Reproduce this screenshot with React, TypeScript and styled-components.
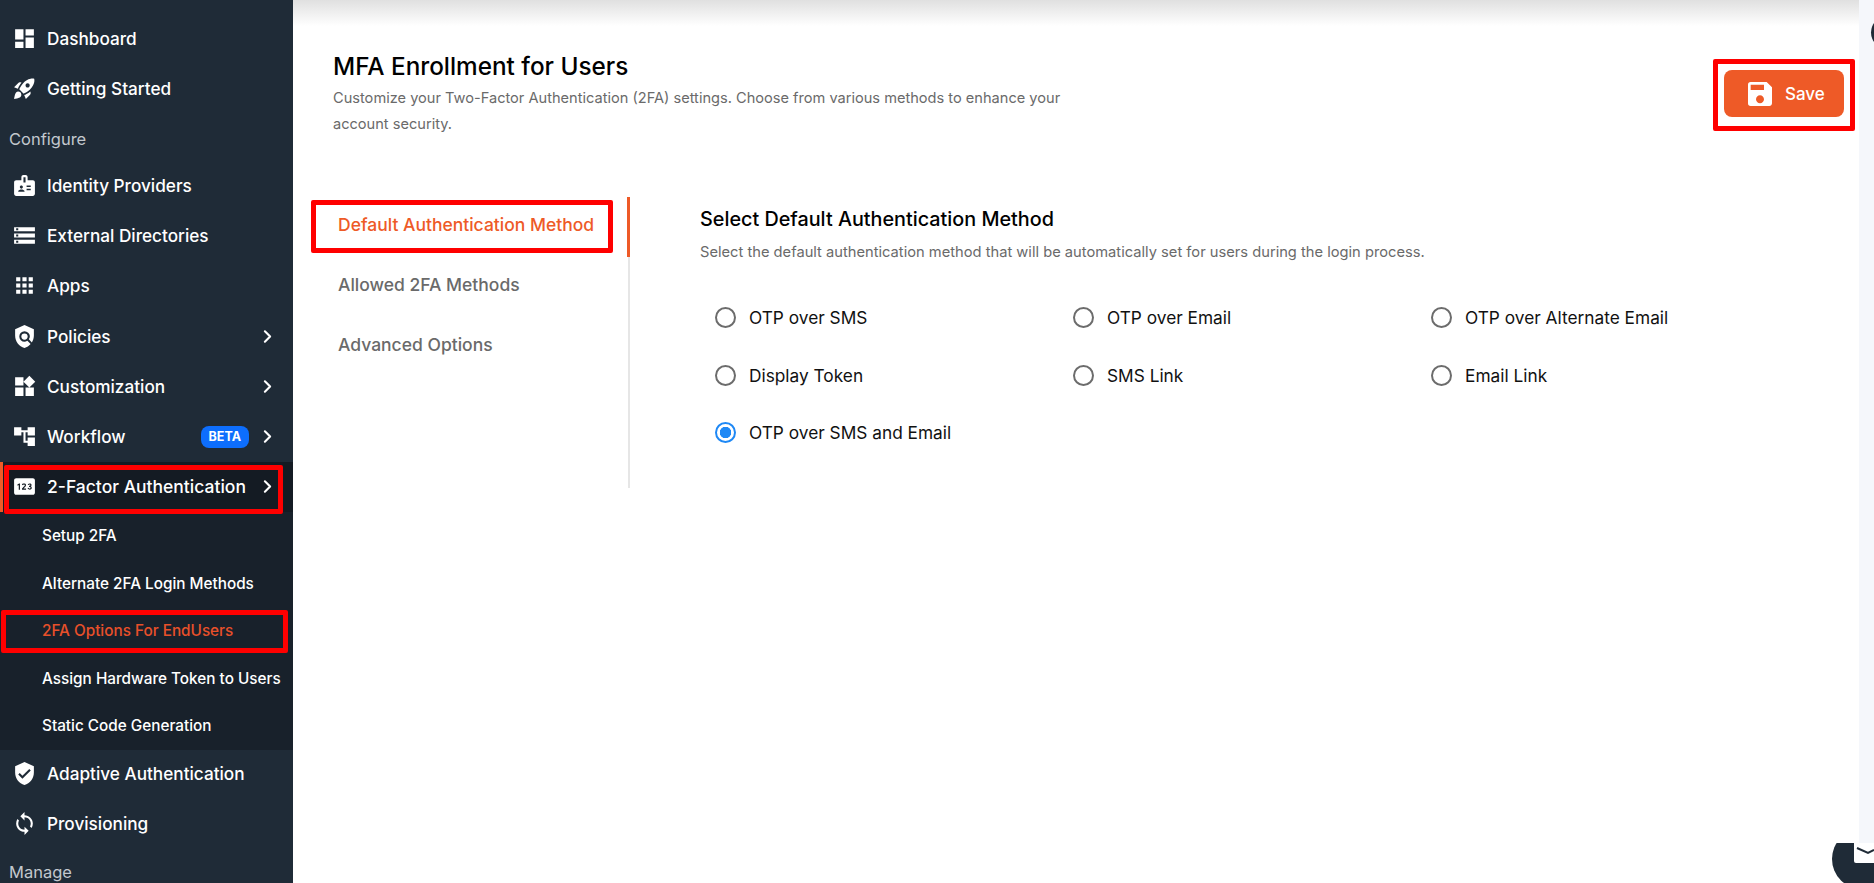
import styled, { createGlobalStyle } from "styled-components";
import { FC, ReactNode } from "react";
import {
  MdAccountTree, MdApps, MdBadge, MdDashboard, MdPin, MdPolicy, MdRocketLaunch,
  MdSave, MdStorage, MdSync, MdVerifiedUser, MdWidgets,
} from "react-icons/md";
import { ChevronRight } from "lucide-react";

const FONT = `"Inter", "Liberation Sans", sans-serif`;

const GlobalStyle = createGlobalStyle`
    html, body {
        margin: 0;
        height: 100%;
        overflow: hidden;
        background: #fff;
        font-family: ${FONT};
    }
`;

const Page = styled.div`
    position: relative;
    display: flex;
    width: 1874px;
    height: 883px;
    overflow: hidden;
`;

const Sidebar = styled.nav`
    flex: 0 0 293px;
    display: flex;
    flex-direction: column;
    padding-top: 13px;
    box-sizing: border-box;
    background: #1f2b37;
    color: #fff;
`;

const NavRow = styled.div<{ $active?: boolean }>`
    position: relative;
    flex: 0 0 50.3px;
    display: flex;
    align-items: center;
    box-sizing: border-box;
    padding-left: ${(p) => (p.$active ? "9px" : "12px")};
    border-left: ${(p) => (p.$active ? "3px solid #ee5a27" : "none")};
    background: ${(p) => (p.$active ? "#141b23" : "transparent")};
    font-size: ${(p) => (p.$active ? "17.5px" : "17.2px")};
    font-weight: 500;
`;

const NavIcon = styled.span`
    flex: 0 0 35px;
    display: flex;
    font-size: 25px;
`;

const NavLabel = styled.span`
    flex: 1;
    white-space: nowrap;
`;

const Beta = styled.span`
    margin-right: 8px;
    padding: 3px 8px;
    border-radius: 8px;
    background: #0d6efd;
    font-size: 12.5px;
    font-weight: 700;
    line-height: 16px;
`;

const Arrow = styled(ChevronRight)`
    margin-right: 15px;
`;

const SectionLabel = styled.div`
    flex: 0 0 46.4px;
    display: flex;
    align-items: center;
    box-sizing: border-box;
    padding: 3.6px 0 0 9px;
    color: #c3c8ce;
    font-size: 16.5px;
`;

const LastSectionLabel = styled(SectionLabel)`
    flex: 1 1 0;
    align-items: flex-end;
    padding: 0 0 1px 9px;
    line-height: 20px;
`;

const SubMenu = styled.div`
    flex: 0 0 238px;
    display: flex;
    flex-direction: column;
    box-sizing: border-box;
    margin-bottom: -2px;
    background: #18212b;
`;

const SubItem = styled.div<{ $active?: boolean }>`
    position: relative;
    flex: 0 0 47.5px;
    display: flex;
    align-items: center;
    padding-left: 42px;
    color: ${(p) => (p.$active ? "#e8502a" : "#fff")};
    font-size: 15.3px;
    font-weight: 500;
`;

const Mark = styled.span<{ $top: number; $right: number; $bottom: number; $left: number }>`
    position: absolute;
    top: ${(p) => p.$top}px;
    right: ${(p) => p.$right}px;
    bottom: ${(p) => p.$bottom}px;
    left: ${(p) => p.$left}px;
    border: 5px solid #f00;
    border-radius: 2px;
    pointer-events: none;
`;

const Main = styled.main`
    flex: 1;
    display: flex;
    flex-direction: column;
    padding: 51px 15px 0 40px;
    background: linear-gradient(#e0e0e0, #fff 26px);
`;

const Header = styled.header`
    display: flex;
    justify-content: space-between;
    align-items: flex-start;
`;

const HeaderText = styled.div`
    width: 745px;
`;

const Title = styled.h1`
    margin: 0;
    color: #000;
    font-size: 24.3px;
    font-weight: 500;
    line-height: 30px;
`;

const Lead = styled.p`
    margin: 4px 0 0;
    color: #6a6a6a;
    font-size: 14.6px;
    line-height: 26px;
`;

const SaveWrap = styled.div`
    position: relative;
    margin-top: 19px;
`;

const SaveButton = styled.button`
    display: flex;
    align-items: center;
    gap: 9px;
    width: 120px;
    height: 47px;
    padding: 0 0 0 20px;
    border: none;
    border-radius: 8px;
    background: #ee5a27;
    color: #fff;
    font-family: ${FONT};
    font-size: 17px;
    font-weight: 500;
`;

const Body = styled.div`
    display: flex;
    margin: 60px 0 0 -7px;
`;

const Tabs = styled.div`
    flex: 0 0 304px;
    display: flex;
    flex-direction: column;
    height: 291px;
    box-sizing: border-box;
    border-right: 2px solid #e6e6e6;
`;

const Tab = styled.div<{ $active?: boolean }>`
    position: relative;
    flex: 0 0 60px;
    display: flex;
    align-items: center;
    box-sizing: border-box;
    margin-right: ${(p) => (p.$active ? "-2px" : "0")};
    padding: 0 0 5px 12px;
    border-right: ${(p) => (p.$active ? "3px solid #ee5a27" : "none")};
    color: ${(p) => (p.$active ? "#ee5a27" : "#6a6a6a")};
    font-size: 17.5px;
    font-weight: 500;
    white-space: nowrap;
`;

const Panel = styled.section`
    padding: 10px 0 0 70px;
`;

const PanelTitle = styled.h2`
    margin: 0;
    color: #000;
    font-size: 19.8px;
    font-weight: 500;
    line-height: 24px;
`;

const PanelText = styled.p`
    margin: 10px 0 0;
    color: #6a6a6a;
    font-size: 14.7px;
    line-height: 22px;
`;

const Options = styled.div`
    display: grid;
    grid-template-columns: repeat(3, 358px);
    grid-auto-rows: 57.5px;
    margin: 26px 0 0 15px;
`;

const Option = styled.label`
    display: flex;
    align-items: center;
    gap: 13px;
    color: #111;
    font-size: 17.3px;
`;

const Radio = styled.input.attrs({ type: "radio" })`
    flex: 0 0 auto;
    appearance: none;
    width: 21px;
    height: 21px;
    margin: 0;
    border: 2px solid #6c6c6c;
    border-radius: 50%;
    background: #fff;

    &:checked {
        border-color: #1e88f5;
        background: radial-gradient(circle, #1e88f5 0 5.5px, #fff 6px);
    }
`;

const ScrollStrip = styled.aside`
    flex: 0 0 15px;
    background: #f5f7fb;
`;

const Avatar = styled.div`
    position: absolute;
    top: 16px;
    left: 1871px;
    width: 33px;
    height: 33px;
    border-radius: 50%;
    background: #1f2b37;
`;

const ChatWidget = styled.svg`
    position: absolute;
    top: 843px;
    left: 1832px;
`;

const topItems = [
  { label: "Identity Providers", icon: <MdBadge /> },
  { label: "External Directories", icon: <MdStorage /> },
  { label: "Apps", icon: <MdApps /> },
  { label: "Policies", icon: <MdPolicy />, arrow: true },
  { label: "Customization", icon: <MdWidgets />, arrow: true },
  { label: "Workflow", icon: <MdAccountTree />, arrow: true, beta: true },
];

const optionLabels = [
  "OTP over SMS", "OTP over Email", "OTP over Alternate Email",
  "Display Token", "SMS Link", "Email Link",
  "OTP over SMS and Email",
];

const Item: FC<{ label: string; icon: ReactNode; arrow?: boolean; beta?: boolean }> = ({ label, icon, arrow, beta }) => (
  <NavRow>
    <NavIcon>{icon}</NavIcon>
    <NavLabel>{label}</NavLabel>
    {beta && <Beta>BETA</Beta>}
    {arrow && <Arrow size={21} strokeWidth={2.4} />}
  </NavRow>
);

export default function App() {
  return (
    <Page>
      <GlobalStyle />
      <Sidebar>
        <Item label="Dashboard" icon={<MdDashboard />} />
        <Item label="Getting Started" icon={<MdRocketLaunch />} />
        <SectionLabel>Configure</SectionLabel>
        {topItems.map((n) => <Item key={n.label} {...n} />)}
        <NavRow $active>
          <NavIcon><MdPin /></NavIcon>
          <NavLabel>2-Factor Authentication</NavLabel>
          <Arrow size={21} strokeWidth={2.4} />
          <Mark $top={3} $right={10} $bottom={-2} $left={1} />
        </NavRow>
        <SubMenu>
          <SubItem>Setup 2FA</SubItem>
          <SubItem>Alternate 2FA Login Methods</SubItem>
          <SubItem $active>
            2FA Options For EndUsers
            <Mark $top={3} $right={5} $bottom={2} $left={1} />
          </SubItem>
          <SubItem>Assign Hardware Token to Users</SubItem>
          <SubItem>Static Code Generation</SubItem>
        </SubMenu>
        <Item label="Adaptive Authentication" icon={<MdVerifiedUser />} />
        <Item label="Provisioning" icon={<MdSync />} />
        <LastSectionLabel>Manage</LastSectionLabel>
      </Sidebar>
      <Main>
        <Header>
          <HeaderText>
            <Title>MFA Enrollment for Users</Title>
            <Lead>Customize your Two-Factor Authentication (2FA) settings. Choose from various methods to enhance your account security.</Lead>
          </HeaderText>
          <SaveWrap>
            <SaveButton><MdSave size={32} />Save</SaveButton>
            <Mark $top={-11} $right={-11} $bottom={-14} $left={-11} />
          </SaveWrap>
        </Header>
        <Body>
          <Tabs>
            <Tab $active>
              Default Authentication Method
              <Mark $top={3} $right={14} $bottom={4} $left={-15} />
            </Tab>
            <Tab>Allowed 2FA Methods</Tab>
            <Tab>Advanced Options</Tab>
          </Tabs>
          <Panel>
            <PanelTitle>Select Default Authentication Method</PanelTitle>
            <PanelText>Select the default authentication method that will be automatically set for users during the login process.</PanelText>
            <Options>
              {optionLabels.map((o) => (
                <Option key={o}>
                  <Radio name="method" defaultChecked={o === "OTP over SMS and Email"} />
                  {o}
                </Option>
              ))}
            </Options>
          </Panel>
        </Body>
      </Main>
      <ScrollStrip />
      <Avatar />
      <ChatWidget width="42" height="40" viewBox="0 0 42 40">
        <circle cx="30" cy="16" r="30" fill="#1f2b37" />
        <rect x="22" y="-3" width="24" height="23" rx="2" fill="#fff" />
        <path d="M25 5l11 5 6-3" fill="none" stroke="#1f2b37" strokeWidth="2" />
      </ChatWidget>
    </Page>
  );
}
